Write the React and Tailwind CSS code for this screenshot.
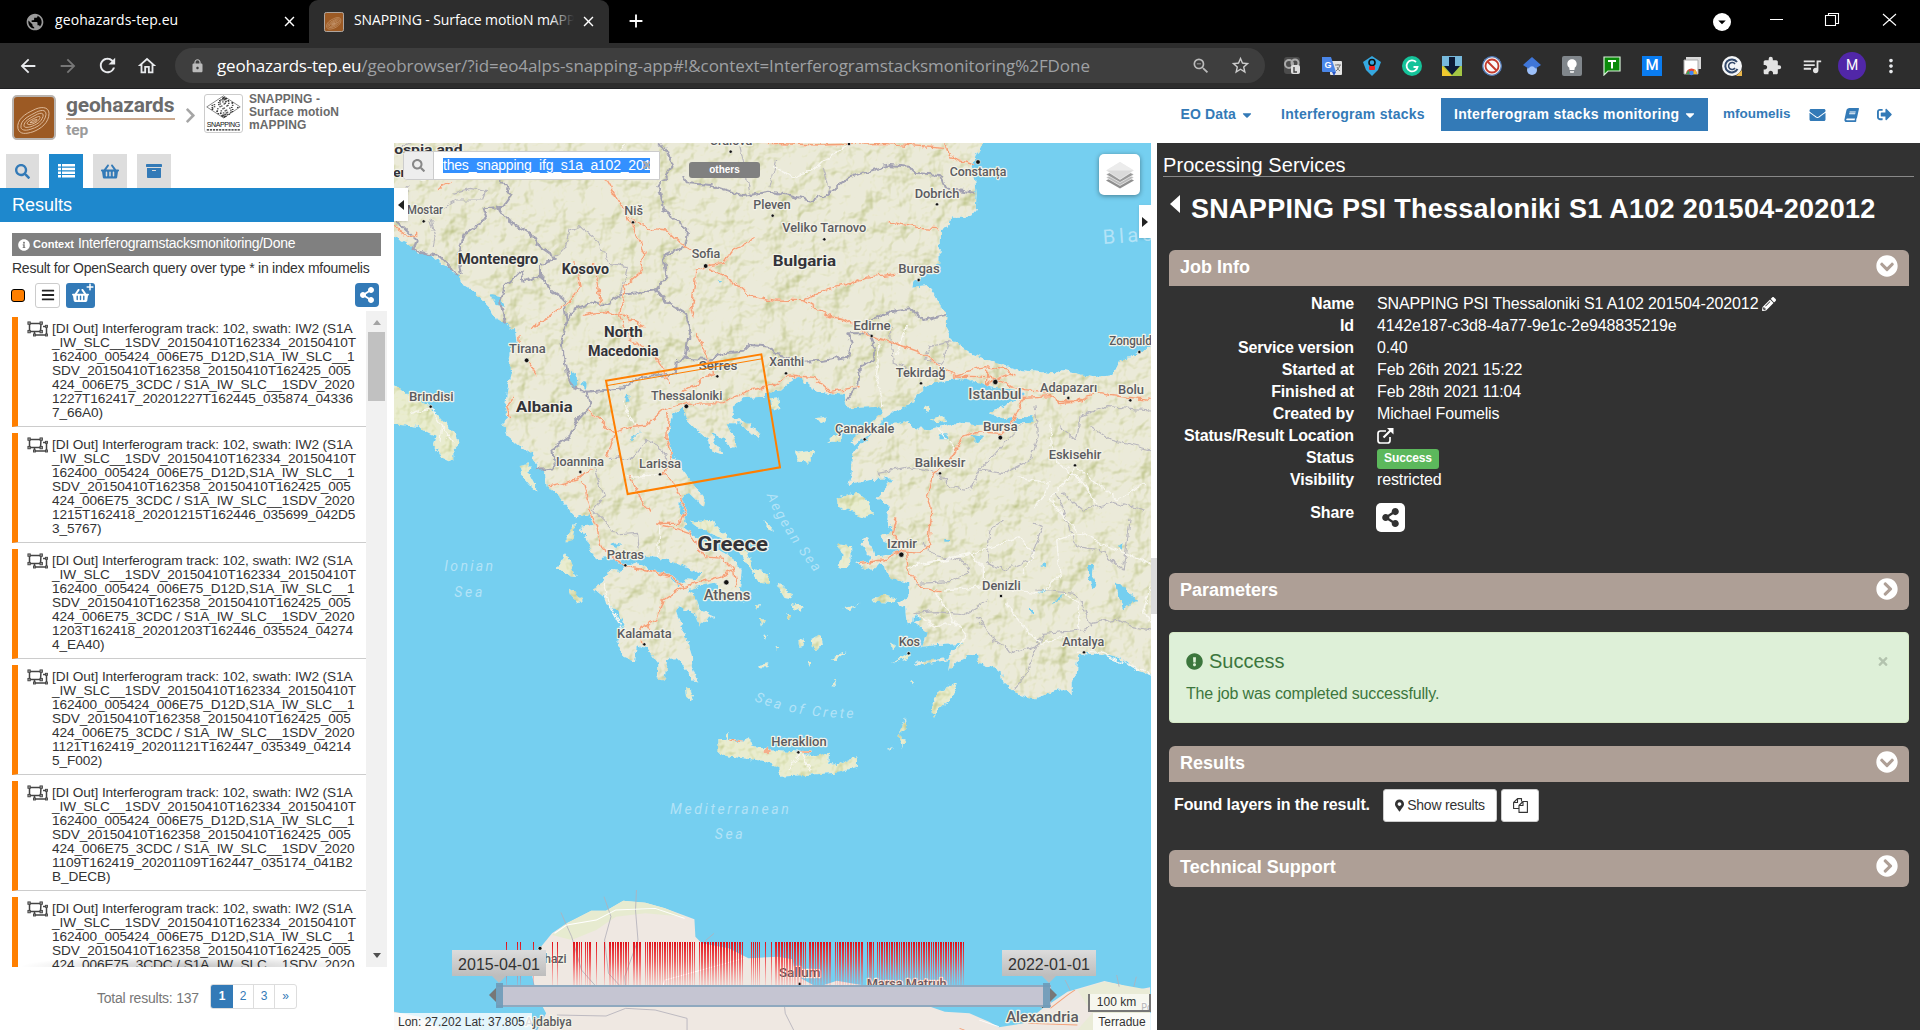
import React from "react";
import {
  FaSearch, FaThList, FaShoppingBasket, FaArchive, FaInfoCircle, FaShareAlt, FaBars, FaEnvelope, FaBook,
  FaSignOutAlt, FaPencilAlt, FaChevronCircleDown, FaChevronCircleRight, FaExclamationCircle,
  FaMapMarkerAlt, FaCaretDown, FaTimes, FaChevronRight, FaPlus,
} from "react-icons/fa";
import {
  MdArrowBack, MdArrowForward, MdRefresh, MdOutlineHome, MdLock, MdAdd, MdClose, MdStarBorder,
  MdExtension, MdQueueMusic, MdMoreVert, MdPublic, MdZoomOut, MdLightbulb, MdArrowDropDown,
} from "react-icons/md";

/* ---------- browser chrome ---------- */

function TopoLogo({ className }) {
  return (
    <svg viewBox="0 0 44 44" className={className} preserveAspectRatio="none">
      <rect x="1" y="1" width="42" height="42" rx="4" fill="#9c5a24" stroke="#b9b4b0" strokeWidth="2" />
      <g fill="none" stroke="#e3c3a4" strokeWidth="0.9">
        <path d="M6 33C4 24 14 18 21 15C28 11 37 11 37 18C37 27 29 33 21 36C14 38 8 39 6 33Z" />
        <path d="M9 32C8 25 16 21 22 18C29 14 34 14 34 19C33 26 27 31 20 33C15 35 10 35 9 32Z" />
        <path d="M12 30C12 26 17 23 23 20C28 17 32 17 31 21C29 27 24 29 19 31C15 32 12 32 12 30Z" />
        <path d="M15 28C16 25 20 24 24 22C28 20 29 21 27 24C25 27 20 29 17 29Z" />
        <path d="M18 27C20 25 23 24 25 24C24 26 21 27 18 27Z" />
      </g>
    </svg>
  );
}

function Extensions() {
  const box = "w-5 h-5 shrink-0";
  return (
    <div className="flex items-center gap-[20px] ml-[17px]">
      <svg viewBox="0 0 20 20" className={box}>
        <rect x="2" y="1" width="16" height="17" rx="3" fill="#4c4c4c" />
        <circle cx="7" cy="8" r="4" fill="none" stroke="#aaa" strokeWidth="2" />
        <circle cx="13" cy="7" r="3.5" fill="none" stroke="#aaa" strokeWidth="2" />
        <rect x="9" y="9" width="9" height="9" rx="2" fill="#ddd" />
        <path d="M12 11v5h3" fill="none" stroke="#444" strokeWidth="1.4" />
      </svg>
      <svg viewBox="0 0 20 20" className={box}>
        <rect x="8" y="5" width="12" height="14" rx="1" fill="#e4e4e4" />
        <path d="M0 1H9L14 16H1Q0 16 0 15Z" fill="#4a86e8" />
        <path d="M10 16h4l-2 4z" fill="#2a56c6" />
        <text x="2.5" y="11.5" fontSize="9" fontWeight="bold" fill="#fff" fontFamily="Liberation Sans, sans-serif">G</text>
        <path d="M13 9h6M16 8v1M18 9q-1 4-4 6M15 11q1 3 3 4" stroke="#777" fill="none" />
      </svg>
      <svg viewBox="0 0 20 20" className={box}>
        <path d="M10 0L19 6L16 14L10 20L4 14L1 6Z" fill="#35a8e0" />
        <circle cx="10" cy="6.500" r="3" fill="none" stroke="#111" strokeWidth="1.6" />
        <rect x="7" y="10" width="6" height="4" rx="1" fill="#e22" />
      </svg>
      <svg viewBox="0 0 20 20" className={box}>
        <circle cx="10" cy="10" r="10" fill="#15c39a" />
        <path d="M14 6A5.500 5.500 0 1 0 15.500 11H11.500" fill="none" stroke="#fff" strokeWidth="1.8" />
      </svg>
      <svg viewBox="0 0 20 20" className={box}>
        <rect width="20" height="20" fill="#77b9dc" />
        <path d="M0 10H20V20H0Z" fill="#a3c644" />
        <path d="M0 10L10 20H0Z" fill="#f1c82e" />
        <path d="M7 1h6v9h5l-8 9-8-9h5z" fill="#0d1a36" />
      </svg>
      <svg viewBox="0 0 20 20" className={box}>
        <circle cx="10" cy="10" r="9.500" fill="#f2f2f2" />
        <circle cx="10" cy="10" r="6.500" fill="#fafafa" stroke="#c33a2c" strokeWidth="1.800" />
        <path d="M5.500 5.500L14.500 14.500" stroke="#c33a2c" strokeWidth="2" />
        <circle cx="10" cy="10" r="9.300" fill="none" stroke="#4d76b4" strokeWidth="1.300" />
      </svg>
      <svg viewBox="0 0 20 20" className={box}>
        <circle cx="10" cy="14" r="5" fill="#9cc0fa" />
        <path d="M10 1L19 9L13.500 12.500Q10 8 6.500 12.500L1 9Z" fill="#3f76d8" />
      </svg>
      <span className="w-5 h-5 rounded-[2px] bg-[#80868b] flex items-center justify-center shrink-0">
        <MdLightbulb className="text-white w-4 h-4" />
      </span>
      <svg viewBox="0 0 20 20" className={box}>
        <path d="M2 1H18V15H6L2 19Z" fill="#0a8a0a" stroke="#d7f2d7" strokeWidth="1.200" />
        <path d="M6 5H14M10 5V12.500" stroke="#fff" strokeWidth="2" />
      </svg>
      <span className="w-5 h-5 bg-[#0a7cf0] text-white text-[15px] flex items-center justify-center font-['Roboto',sans-serif] font-medium shrink-0">M</span>
      <svg viewBox="0 0 20 20" className={box}>
        <path d="M4 1H19V13H4Z" fill="#d8d8d8" />
        <path d="M2 4H16V18H2Z" fill="#fff" stroke="#aaa" />
        <path d="M4 18A5.500 5.500 0 0 1 15 18Z" fill="#de4b3c" />
        <path d="M10 18L15 18L13 13Z" fill="#f2bf2b" />
        <path d="M4 18L6.500 14L8 18Z" fill="#3aa757" />
        <circle cx="9.500" cy="17" r="2.200" fill="#4285f4" />
      </svg>
      <svg viewBox="0 0 20 20" className={box}>
        <circle cx="10" cy="10" r="10" fill="#f4f6f8" />
        <path d="M15 6A6.500 6.500 0 1 0 15.500 13" fill="none" stroke="#33496b" strokeWidth="2" />
        <path d="M13 8A3.500 3.500 0 1 0 13 12" fill="none" stroke="#33496b" strokeWidth="1.500" />
        <path d="M14 20L20 14V20Z" fill="#e9b64a" />
      </svg>
      <MdExtension className="w-5 h-5 text-[#e3e3e3] shrink-0" />
      <MdQueueMusic className="w-[22px] h-[22px] text-[#e3e3e3] shrink-0 -mx-px" />
    </div>
  );
}

function Chrome() {
  return (
    <div className="font-['Open_Sans','Noto_Sans',sans-serif] shrink-0">
      <div className="h-[43px] bg-black flex items-start">
        <div className="w-[309px] h-[43px] flex items-center pl-[25px] text-white">
          <MdPublic className="w-[20px] h-[20px] text-[#9a9a9a]" />
          <span className="ml-[10px] w-[218px] text-[14px] leading-[18px] tracking-[0.1px] mb-[3px]">geohazards-tep.eu</span>
          <MdClose className="w-[17px] h-[17px] ml-[8px]" />
        </div>
        <div className="w-[300px] h-[43px] bg-[#2d2d2d] rounded-t-[9px] flex items-center pl-[15px] text-white">
          <TopoLogo className="w-5 h-5" />
          <span className="relative ml-[10px] w-[220px] overflow-hidden whitespace-nowrap text-[14px] leading-[20px] tracking-[-0.1px] mb-[3px]">
            SNAPPING - Surface motioN mAPPING
            <span className="absolute right-0 inset-y-0 w-6 bg-gradient-to-r from-transparent to-[#2d2d2d]" />
          </span>
          <MdClose className="w-[17px] h-[17px] ml-[6px]" />
        </div>
        <MdAdd className="w-[22px] h-[22px] text-white mt-[10px] ml-[16px]" />
        <div className="ml-auto flex items-center text-white h-[38px] pr-[21px]">
          <span className="w-[18px] h-[18px] mt-[6px] mr-[3px] rounded-full bg-white flex items-center justify-center text-black">
            <MdArrowDropDown className="w-[18px] h-[18px]" />
          </span>
          <svg viewBox="0 0 130 16" className="w-[130px] h-[16px] ml-[35px]">
            <g fill="none" stroke="#fff" strokeWidth="1.1">
              <path d="M1 8.500H14M56.500 4.500H66.500V14.500H56.500ZM59.500 4.500V2.500H69.500V12.500H66.500M114 3L127 14.500M127 3L114 14.500" />
            </g>
          </svg>
        </div>
      </div>
      <div className="h-[46px] bg-[#2d2d2d] border-b border-[#202124] flex items-center text-[#e8eaed]">
        <MdArrowBack className="w-[22px] h-[22px] ml-[17px]" />
        <MdArrowForward className="w-[22px] h-[22px] ml-[18px] text-[#777]" />
        <MdRefresh className="w-[23px] h-[23px] ml-[17px]" />
        <MdOutlineHome className="w-[22px] h-[22px] ml-[17px]" />
        <div className="ml-[17px] w-[1090px] h-[35px] bg-[#3e3e3e] rounded-full flex items-center pl-[15px] pr-[14px] text-[17px] tracking-[-0.2px]">
          <MdLock className="w-[15px] h-[16px] text-[#bbb]" />
          <span className="ml-[12px] text-white">geohazards-tep.eu</span>
          <span className="text-[#9fa1a4] tracking-[-0.07px]">/geobrowser/?id=eo4alps-snapping-app#!&amp;context=Interferogramstacksmonitoring%2FDone</span>
          <MdZoomOut className="w-[20px] h-[20px] ml-auto text-[#bbb]" />
          <MdStarBorder className="w-[21px] h-[21px] ml-[19px] text-[#ccc]" />
        </div>
        <Extensions />
        <span className="ml-[16px] w-[28px] h-[28px] rounded-full bg-[#5127a8] text-white text-[14px] flex items-center justify-center font-['Roboto',sans-serif]">M</span>
        <MdMoreVert className="w-[22px] h-[22px] ml-[14px]" />
      </div>
    </div>
  );
}

/* ---------- site header ---------- */

const speckles = Array.from({ length: 70 }, (_, i) => {
  const y = ((i * 37) % 29) - 14;
  const half = 17 * (1 - Math.abs(y) / 15);
  const x = (((i * 53) % 21) / 10 - 1) * half;
  return [21 + x, 13.5 + y * 0.78];
});

function Header() {
  return (
    <div className="h-[54px] shrink-0 flex items-start bg-white">
      <TopoLogo className="w-[44px] h-[45px] ml-[12px] mt-[6px]" />
      <div className="ml-[10px] mt-[6px] w-[109px] font-['Roboto',sans-serif]">
        <div className="h-[25px] border-b-2 border-[#cba98d] text-[#6b6b6b] font-bold text-[21px] leading-[21px] tracking-[-0.2px]">geohazards</div>
        <div className="text-[#9b9b9b] font-bold text-[15.500px] leading-[21px]">tep</div>
      </div>
      <FaChevronRight className="w-[13px] h-[17px] mt-[18px] ml-[9px] text-[#a5a5a5]" />
      <div className="ml-[7px] mt-[5px] w-[39px] h-[39px] border border-[#ccc] rounded-[3px]">
        <svg viewBox="0 0 42 42" className="w-full h-full">
          <path d="M21 1L40 13.500L21 26L2 13.500Z" fill="#fff" stroke="#555" strokeWidth="0.8" />
          {speckles.map(([x, y], i) => (
            <rect key={i} x={x} y={y} width="1.800" height="1.200" fill="#333" />
          ))}
          <text x="2" y="36" fontSize="8" textLength="38" fill="#111" fontFamily="Liberation Sans, sans-serif">SNAPPING</text>
          <path d="M2 39.500H40" stroke="#222" strokeWidth="1.500" strokeDasharray="2.500 1" />
        </svg>
      </div>
      <div className="ml-[6px] mt-[4px] font-bold text-[12px] leading-[13px] text-[#6a6a6a] w-[110px] tracking-[0.1px]">
        <div>SNAPPING -</div>
        <div>Surface motioN</div>
        <div>mAPPING</div>
      </div>
      <div className="ml-auto mt-[9px] h-[33px] flex items-center font-bold text-[14px] text-[#337ab7] pr-[28px] whitespace-nowrap">
        <span className="tracking-[0.15px]">EO Data</span>
        <FaCaretDown className="w-[10px] h-[14px] ml-[6px]" />
        <span className="ml-[29px] w-[144px] tracking-[0.27px]">Interferogram stacks</span>
        <span className="ml-[16px] w-[267px] h-[33px] bg-[#337ab7] text-white flex items-center pl-[13px] tracking-[0.32px]">
          Interferogram stacks monitoring
          <FaCaretDown className="w-[10px] h-[14px] ml-[6px]" />
        </span>
        <span className="ml-[15px] w-[68px] text-[13.500px] tracking-[0px]">mfoumelis</span>
        <FaEnvelope className="w-[17px] h-[16px] ml-[18px]" />
        <FaBook className="w-[15px] h-[14px] ml-[18px] -skew-x-12" />
        <FaSignOutAlt className="w-[15px] h-[15px] ml-[18px]" />
      </div>
    </div>
  );
}

/* ---------- left panel ---------- */

const common = [
  "[DI Out] Interferogram track: 102, swath: IW2 (S1A",
  "_IW_SLC__1SDV_20150410T162334_20150410T",
  "162400_005424_006E75_D12D,S1A_IW_SLC__1",
  "SDV_20150410T162358_20150410T162425_005",
  "424_006E75_3CDC / S1A_IW_SLC__1SDV_2020",
];
const items = [
  ["1227T162417_20201227T162445_035874_04336", "7_66A0)"],
  ["1215T162418_20201215T162446_035699_042D5", "3_5767)"],
  ["1203T162418_20201203T162446_035524_04274", "4_EA40)"],
  ["1121T162419_20201121T162447_035349_04214", "5_F002)"],
  ["1109T162419_20201109T162447_035174_041B2", "B_DECB)"],
  [],
];

function PolyIcon() {
  return (
    <svg viewBox="0 0 22 16" className="w-[22px] h-[16px] shrink-0">
      <g fill="none" stroke="#444" strokeWidth="1.500">
        <path d="M2.500 2.500H14L13.500 10.500H2.500ZM16 5.500H19.500V14H7.500V11" />
      </g>
      <g fill="#999" stroke="#444" strokeWidth="0.900">
        <rect x="0.900" y="0.900" width="2.400" height="2.400" /><rect x="13" y="0.900" width="2.400" height="2.400" />
        <rect x="0.900" y="9.400" width="2.400" height="2.400" /><rect x="13" y="9.400" width="2.400" height="2.400" />
        <rect x="18.500" y="4.300" width="2" height="2" /><rect x="18.500" y="13" width="2" height="2" />
        <rect x="6.500" y="13" width="2" height="2" />
      </g>
    </svg>
  );
}

function LeftPanel() {
  const tab = "h-[34px] flex items-center justify-center bg-[#ddd] text-[#337ab7]";
  return (
    <div className="w-[394px] shrink-0 bg-white flex flex-col">
      <div className="flex pl-[6px] gap-[10px] pt-[11px]">
        <div className={`${tab} w-[33px]`}><FaSearch className="w-[15px] h-[15px]" /></div>
        <div className="h-[34px] w-[34px] flex items-center justify-center bg-[#1e88cd] text-white">
          <svg viewBox="0 0 17 14" className="w-[17px] h-[14px]" fill="currentColor">
            <path d="M0 0h3v2.500H0zM4 0h13v2.500H4zM0 3.700h3v2.500H0zM4 3.700h13v2.500H4zM0 7.400h3v2.500H0zM4 7.400h13v2.500H4zM0 11.100h3v2.500H0zM4 11.100h13v2.500H4z" />
          </svg>
        </div>
        <div className={`${tab} w-[34px]`}><FaShoppingBasket className="w-[18px] h-[17px]" /></div>
        <div className={`${tab} w-[34px]`}><FaArchive className="w-[16px] h-[16px]" /></div>
      </div>
      <div className="h-[34px] bg-[#1e88cd] text-white text-[18px] leading-[35px] pl-[12px]">Results</div>
      <div className="mt-[11px] mx-[12px] w-[369px] h-[23px] bg-[#808080] text-white flex items-center pl-[6px]">
        <FaInfoCircle className="w-[12px] h-[12px]" />
        <span className="ml-[3px] text-[11px] font-bold">Context</span>
        <span className="ml-[4px] mb-[2px] text-[14px] tracking-[-0.27px]">Interferogramstacksmonitoring/Done</span>
      </div>
      <div className="ml-[12px] h-[24px] leading-[25px] text-[14px] text-[#333] tracking-[-0.25px] whitespace-nowrap">Result for OpenSearch query over type * in index mfoumelis</div>
      <div className="flex items-center h-[31px] pl-[11px] pb-px">
        <span className="w-[14px] h-[13px] mt-px rounded-[3px] bg-[#ff7f00] border border-black" />
        <span className="ml-[10px] w-[25px] h-[25px] rounded-[3px] border border-[#ccc] flex items-center justify-center text-[#222]"><FaBars className="w-[14px] h-[14px]" /></span>
        <span className="relative ml-[6px] w-[29px] h-[25px] rounded-[3px] bg-[#337ab7] flex items-center justify-center text-white">
          <FaShoppingBasket className="w-[17px] h-[15px]" />
          <FaPlus className="absolute right-[1px] top-0 w-[8px] h-[8px]" />
        </span>
        <span className="ml-[260px] w-[24px] h-[24px] rounded-[4px] bg-[#337ab7] flex items-center justify-center text-white"><FaShareAlt className="w-[16px] h-[16px]" /></span>
      </div>
      <div className="flex h-[656px]">
        <div className="relative w-[366px] h-[656px] overflow-hidden pl-[12px] pt-[6px]">
          {items.map((it, i) => (
            <div key={i} className="h-[110px] mb-[6px] border-l-[6px] border-l-[#ff7f00] border-b border-b-[#ccc] flex pt-[4px] pl-[9px] text-[#444]">
              <PolyIcon />
              <div className="ml-[3px] pt-px text-[13.650px] leading-[14px] whitespace-nowrap tracking-[-0.1px] text-[#333]">
                {[...common, ...it].map((l) => <div key={l}>{l}</div>)}
              </div>
            </div>
          ))}
          <div className="absolute left-[18px] right-0 bottom-0 h-[12px] bg-[radial-gradient(ellipse_at_bottom,rgba(0,0,0,0.24),transparent_70%)]" />
        </div>
        <div className="w-[21px] bg-[#f1f1f1] flex flex-col items-center">
          <div className="mt-[9px] w-0 h-0 border-x-[4.500px] border-x-transparent border-b-[5px] border-b-[#a3a3a3]" />
          <div className="mt-[7px] w-[17px] h-[69px] bg-[#c1c1c1]" />
          <div className="mt-auto mb-[9px] w-0 h-0 border-x-[4.500px] border-x-transparent border-t-[5px] border-t-[#505050]" />
        </div>
      </div>
      <div className="flex items-start pt-[17px] pl-[97px]">
        <span className="w-[113px] pt-[5px] text-[14px] leading-[18px] text-[#777] tracking-[-0.22px]">Total results: 137</span>
        <div className="flex h-[25px] border border-[#ddd] rounded-[3px] text-[12px] leading-[22px] text-[#337ab7] text-center overflow-hidden">
          <span className="w-[22px] bg-[#337ab7] text-white font-bold">1</span>
          <span className="w-[21px] border-r border-[#ddd]">2</span>
          <span className="w-[21px] border-r border-[#ddd]">3</span>
          <span className="w-[21px] leading-[23px]">»</span>
        </div>
      </div>
    </div>
  );
}

/* ---------- map ---------- */
/* Map drawings use three units for one pixel; the visible window starts at (12, 9). */

const mainland =
  "M-20 -20H1790L1760 40L1750 70L1760 160L1757 210L1740 230L1685 230L1675 265L1650 270L1648 370L1625 385L1575 425L1570 440L1610 435L1630 460L1660 510L1670 530L1665 560L1685 600L1740 640L1820 670L1890 690L1990 700L2020 690L2110 712L2170 705L2190 665L2240 640L2320 600V1620L2283 1605L2240 1590L2190 1555L2125 1540L2065 1545L2060 1605L2045 1630L2045 1665L2030 1650L2000 1652L1940 1678L1910 1670L1870 1655L1840 1630L1835 1595L1800 1580L1765 1570L1760 1540L1740 1550L1700 1565L1675 1592L1680 1560L1600 1570L1575 1578L1580 1565L1675 1555L1680 1538L1720 1512L1640 1515L1595 1520L1610 1480L1575 1450L1595 1440L1572 1422L1570 1445L1550 1450L1545 1400L1520 1390L1555 1375L1555 1330L1495 1310L1485 1280L1470 1272L1445 1295L1400 1268L1445 1265L1418 1215L1420 1195L1440 1205L1455 1250L1530 1240L1525 1220L1480 1205L1475 1185L1508 1175L1485 1130L1500 1100L1460 1075L1510 1018L1440 1020L1375 1035L1385 1000L1390 935L1440 890L1480 855L1520 850L1555 840L1570 865L1620 868L1690 850L1760 855L1900 850L1928 848L1925 832L1880 830L1840 835L1795 820L1830 805L1880 780L1905 762L1895 752L1840 745L1780 735L1730 718L1670 720L1600 740L1570 785L1520 810L1475 840L1430 890L1395 912L1385 900L1440 850L1480 815L1470 800L1375 805L1365 765L1290 755L1260 740L1225 710L1200 725L1170 752L1140 755L1120 770L1060 775L1025 800L1030 830L1060 845L1105 875L1110 895L1080 880L1050 850L1010 850L1025 880L1040 920L1025 928L1000 895L965 880L970 900L1000 945L960 930L955 900L920 870L890 840L880 800L845 825L832 900L850 950L880 990L915 1040L947 1080L942 1100L900 1060L872 1080L870 1120L890 1150L880 1165L900 1180L960 1215L1030 1255L1055 1290L1050 1350L1060 1385L1020 1365L1000 1355L975 1325L930 1335L895 1350L920 1380L930 1410L975 1430L950 1440L925 1458L915 1420L870 1402L858 1412L870 1450L895 1505L910 1555L905 1580L925 1625L905 1620L875 1570L860 1555L832 1556L822 1622L803 1615L805 1570L770 1525L740 1515L735 1565L700 1550L682 1505L690 1480L705 1450L685 1415L645 1390L640 1370L610 1345L640 1325L650 1292L690 1295L700 1280L740 1265L780 1290L840 1310L865 1335L890 1330L885 1315L925 1318L935 1300L900 1285L850 1265L800 1250L740 1245L690 1250L650 1255L615 1258L595 1210L570 1160L610 1155L600 1125L560 1135L525 1095L500 1060L470 1040L465 1000L440 975L425 940L380 910L350 885L337 848L357 830L345 800L350 760L358 720L365 690L355 665L360 630L380 610L375 570L345 552L315 535L300 505L270 475L240 445L215 430L205 405L165 375L120 345L80 335L50 310L-20 275Z";

const islands = [
  "M-10 715L40 755L110 790L150 835L200 885L205 915L190 930L190 968L150 950L132 915L140 890L80 860L-10 850Z",
  "M385 975L420 970L415 1000L445 1055L420 1035L395 1005Z",
  "M530 1190L555 1150L548 1200L530 1205Z",
  "M495 1290L515 1265L525 1240L540 1260L560 1310L540 1310L515 1290Z",
  "M535 1345L580 1375L565 1392L540 1365Z",
  "M885 1640L912 1662L902 1682L888 1670Z",
  "M900 1145L960 1140L1000 1180L1045 1210L1075 1240L1090 1290L1140 1300L1135 1330L1105 1325L1070 1270L1040 1225L980 1190L920 1160Z",
  "M1160 1335L1200 1360L1205 1375L1180 1370Z",
  "M1095 1395L1110 1392L1102 1412Z",
  "M1112 1435L1125 1440L1116 1460Z",
  "M1120 1485L1133 1482L1128 1496Z",
  "M1160 1330L1190 1345L1204 1375L1180 1360Z",
  "M1205 1392L1244 1402L1235 1412L1210 1405Z",
  "M1190 1425H1198V1440H1188Z",
  "M1225 1502L1245 1498L1240 1518L1228 1520Z",
  "M1262 1500L1290 1482L1295 1510L1280 1530L1264 1515Z",
  "M1360 1405L1405 1395L1412 1388L1380 1410Z",
  "M1448 1378L1480 1365L1520 1375L1510 1390L1455 1385Z",
  "M1340 1210L1380 1215L1382 1260L1365 1290L1345 1285L1358 1245Z",
  "M1340 1075L1400 1055L1430 1080L1452 1120L1425 1130L1380 1115L1345 1100Z",
  "M1215 935L1240 932L1272 930L1262 965L1225 962Z",
  "M1140 778L1165 775L1168 800L1145 810Z",
  "M1278 835L1305 830L1310 845L1290 850Z",
  "M1312 905L1330 888L1355 885L1355 905Z",
  "M1620 835L1660 828L1668 845L1640 850Z",
  "M1598 805L1618 800L1615 812Z",
  "M985 1800L1005 1800L1012 1775L1018 1800L1060 1805L1080 1792L1085 1820L1140 1828L1230 1835L1280 1850L1320 1838L1318 1870L1340 1878L1365 1862L1402 1852L1400 1885L1340 1898L1170 1910L1168 1885L1120 1862L1060 1855L985 1845Z",
  "M1700 1628L1690 1670L1650 1705L1630 1730L1625 1690L1650 1650Z",
  "M1545 1735L1548 1765L1530 1780L1548 1810L1535 1820L1528 1785Z",
  "M1490 1830L1512 1820L1500 1832Z",
  "M1505 1570L1560 1540L1562 1552L1520 1565Z",
  "M1105 1575L1135 1570L1130 1582L1108 1582Z",
  "M1248 1560L1262 1570L1258 1580Z",
  "M1322 1558L1370 1535L1340 1560Z",
  "M1325 1638L1340 1622L1332 1618L1338 1640Z",
  "M1155 1517L1168 1522L1162 1532Z",
  "M1120 1140L1140 1160L1150 1172L1130 1165Z",
  "M1502 1510L1518 1520L1510 1530Z",
  "M1560 1622L1578 1630L1572 1636Z",
];

const lakes = [
  "M540 690L560 705L562 740L552 748L540 735Z",
  "M575 725L590 730L588 748Z",
  "M755 870L725 895L722 905Z",
  "M300 462L330 468L345 500L320 495Z",
  "M1650 880L1675 880L1678 898L1648 898Z",
  "M1740 885L1785 890L1760 905Z",
  "M2090 1275H2112L2108 1300L2122 1335L2108 1355L2100 1320Z",
  "M2177 1330L2200 1335L2238 1385L2198 1405Z",
  "M1985 1390L2020 1365L2015 1380Z",
  "M1940 1360L1975 1350L1960 1365Z",
  "M1950 1278L1965 1272V1285Z",
  "M2185 1215L2198 1210L2190 1235Z",
  "M660 1215L690 1208L680 1225Z",
  "M980 420H992V430Z",
  "M710 765H718V785H710Z",
  "M1660 1200H1680V1208H1660Z",
  "M1920 1410H1932V1420H1920Z",
];

const borders = [
  "M330 120L365 165L340 200L280 205L290 235L225 280L205 330L215 400",
  "M320 200L345 235L420 280L440 310L490 345L495 362L450 372L450 408L400 425L395 390L345 440L330 485L345 548",
  "M450 408L490 455L520 475L530 545L515 610L530 700L550 745L590 755L600 800L555 850L540 890L490 925L495 985L440 990",
  "M530 545L550 510L610 485L640 495L690 465L740 460L800 450",
  "M812 9L850 70L805 140L825 215L895 270L885 320L820 350L830 410L800 450L835 490L885 520L900 575L890 655L860 660L858 700L750 710L700 745L590 755",
  "M890 657L960 660L1000 640L1060 635L1080 615L1140 620L1160 645L1240 665L1300 662L1375 650L1385 615L1372 580L1440 580L1455 620L1450 660L1410 680L1405 735L1370 780",
  "M1430 545L1480 525L1520 510L1560 505L1600 540L1665 525",
  "M880 110L890 130L960 135L1060 168L1140 155L1200 165L1260 182L1320 160L1370 115L1420 98L1500 75L1555 80L1570 98L1650 105L1665 145L1755 158",
  "M15 240L80 300L70 330L150 350L205 408",
];

const softBorders = [
  "M495 350L530 320L540 270L570 260L610 290L640 330L660 370L712 380L700 440L685 465",
  "M12 180L60 140M120 240L135 290L130 320M150 210L200 180L280 180L290 155L240 145L190 160",
  "M655 955L730 955L770 900L820 930L830 965M610 975L640 1070L610 1110L660 1160L680 1185L740 1180L745 1230",
  "M1640 995L1680 1040L1740 1050L1770 990L1840 1000L1920 960L1945 880L1935 800",
  "M1840 1140L1800 1170L1790 1270L1850 1290L1920 1260L1960 1160L1930 1150",
  "M1580 1330L1680 1325L1740 1300L1720 1265L1630 1245L1600 1210",
  "M1575 1420L1640 1415L1720 1425L1790 1380M1765 1430L1800 1490L1870 1540L1940 1520L1910 1600L1870 1650",
  "M1940 1520L1960 1480L2080 1470L2105 1460L2060 1360L1940 1350M2105 1450L2180 1435L2230 1460L2283 1470",
  "M2010 860L2060 900L2070 830L2150 800L2283 810M2020 1060L2080 1110L2170 1085L2260 1110M2283 930L2160 900L2100 860",
  "M1680 600L1660 670L1600 660L1620 620L1685 605M1500 550L1505 620L1510 670L1560 690",
  "M2000 1060L2060 1220L2130 1230L2200 1290L2220 1140M1900 850L1760 1000M1465 1000L1560 980L1640 995",
  "M15 30L60 9M200 9L180 60M1160 60L1140 140M1300 80L1320 160M1050 20L1080 160",
];

const roads = [
  "M650 120L690 190L715 230L765 340L750 400L705 440L690 520L760 560",
  "M730 240L780 265L830 270L870 310L900 330M945 378L1000 370L1030 330L1090 300M945 378L918 390L905 500L912 528",
  "M960 385L1050 440L1080 468L1150 480L1240 482L1290 455L1380 430L1430 412L1520 400",
  "M1240 482L1300 520L1370 540L1440 588L1530 615L1600 640L1650 680L1700 705L1760 685L1790 680L1850 690L1875 705",
  "M1690 708L1760 710L1800 715L1830 725L1900 748L1960 755L2000 780L2060 785L2120 760L2190 770L2283 778",
  "M1900 775L1985 770L2010 788L2080 782",
  "M580 525L640 515L690 525L720 600L790 640L820 690L835 730M555 365L570 440L540 480L480 530L420 565M610 370L632 490",
  "M595 810L675 880L720 860L770 855L820 810L890 790L1000 788L1080 750L1140 740L1200 705L1270 712L1320 755L1410 740",
  "M835 820L830 900L845 960L820 1000L860 1040L885 1110L870 1150L810 1150",
  "M675 880L650 950M480 1040L560 1020L600 985M575 1025L600 1110L620 1160L635 1220L705 1280L770 1290L840 1305L880 1340L990 1310L1030 1290",
  "M880 1340L820 1380L800 1440L750 1460L755 1510M770 1450L790 1480",
  "M720 1010L755 1080L780 1120M390 590V640M415 665L440 705M370 775L350 800L358 830",
  "M800 1152L860 1165L905 1180L940 1250L1000 1255L1030 1285L1040 1340",
  "M1495 245L1580 262L1645 266M1660 9L1680 50L1750 72",
  "M1680 960L1720 890L1760 875L1830 880L1865 850L1900 775M1680 960L1630 1000L1610 1070L1625 1120L1615 1220L1590 1240L1530 1235L1480 1260L1410 1270",
  "M1550 1240L1555 1290L1600 1345L1650 1355M1520 1140L1510 1180L1535 1225M920 585L950 650L970 700L870 760M1790 690V730L1865 700",
  "M1020 1800L1060 1805M1120 1830L1140 1830M1225 1838L1265 1840",
  "M12 262L60 290L80 280M145 145L180 128M1110 9L1290 15L1480 10L1660 25",
];

const whiteRoads = [
  "M60 820L120 805L155 860L150 905M155 860L190 905M700 780L720 830L740 860M700 1010L800 1005M810 1150L805 1250",
  "M1470 610L1460 700L1475 800M1550 560L1520 640M1640 860L1700 930M1980 850L1985 950L2080 1030L2120 1090M1880 1010L1980 1030L1940 1100",
  "M1560 1280L1720 1250L1890 1190L1930 1240L1900 1300M1600 1270L1740 1240L1780 1280L1780 1340L1660 1350M1780 1340L1960 1360L2010 1300L2000 1200L2070 1180L2180 1230L2283 1270",
  "M1640 1360L1690 1440L1730 1490L1700 1520M1850 1395L1890 1450L1950 1510L2020 1490M1580 1430L1640 1460L1690 1450M2060 1540L2130 1535L2230 1580L2283 1600",
  "M2020 1360L2060 1390L2070 1470M2283 1340L2260 1400L2280 1450M2060 1170L1980 1080L2060 980L2180 1080L2260 1030M640 1330L660 1400L700 1470",
  "M1150 80L1210 110L1270 90L1300 60L1370 20M1230 1840L1195 1890M1235 1845L1260 1890M700 9L680 60",
];

const halo = { paintOrder: "stroke", stroke: "#f4f3e8", strokeWidth: 7, strokeLinejoin: "round" };

/* text, centre x, baseline, width, font size, weight */
const labels = [
  ["ospia and", 115, 43, 205, 40, 700],
  ["erzegovina", 110, 112, 200, 40, 700],
  ["Mostar", 105, 221, 108, 36, 500],
  ["Niš", 731, 225, 56, 36, 500],
  ["Craiova", 1023, 15, 128, 36, 500],
  ["Sofia", 948, 355, 86, 36, 500],
  ["Montenegro", 324, 373, 242, 42, 700],
  ["Kosovo", 586, 403, 142, 42, 700],
  ["North", 700, 591, 116, 42, 700],
  ["Macedonia", 700, 648, 212, 42, 700],
  ["Tirana", 412, 640, 110, 36, 500],
  ["Brindisi", 124, 782, 134, 36, 500],
  ["Albania", 463, 817, 170, 44, 700],
  ["Serres", 984, 690, 116, 36, 500],
  ["Thessaloniki", 890, 779, 214, 36, 500],
  ["Ioannina", 570, 978, 144, 36, 500],
  ["Larissa", 810, 983, 126, 36, 500],
  ["Constanța", 1764, 107, 170, 36, 500],
  ["Dobrich", 1641, 174, 134, 36, 500],
  ["Pleven", 1146, 208, 112, 36, 500],
  ["Veliko Tarnovo", 1303, 277, 252, 36, 500],
  ["Bulgaria", 1243, 379, 190, 44, 700],
  ["Burgas", 1587, 400, 124, 36, 500],
  ["Edirne", 1446, 570, 112, 36, 500],
  ["Xanthi", 1190, 679, 104, 36, 500],
  ["Tekirdağ", 1592, 711, 150, 36, 500],
  ["Istanbul", 1815, 777, 160, 42, 500],
  ["Adapazarı", 2036, 755, 172, 36, 500],
  ["Bolu", 2223, 762, 78, 36, 500],
  ["Zonguldak", 2240, 616, 164, 36, 500],
  ["Bursa", 1831, 872, 104, 38, 500],
  ["Çanakkale", 1424, 879, 178, 36, 500],
  ["Balıkesir", 1650, 981, 152, 36, 500],
  ["Eskisehir", 2055, 957, 158, 36, 500],
  ["Patras", 706, 1257, 112, 36, 500],
  ["Greece", 1028, 1232, 212, 60, 700],
  ["Athens", 1011, 1379, 140, 42, 500],
  ["Kalamata", 763, 1493, 164, 36, 500],
  ["Izmir", 1536, 1223, 90, 38, 500],
  ["Denizli", 1834, 1349, 116, 36, 500],
  ["Kos", 1558, 1519, 64, 36, 500],
  ["Antalya", 2080, 1518, 126, 36, 500],
  ["Heraklion", 1227, 1817, 166, 36, 500],
  ["Benghazi", 455, 2470, 150, 36, 500],
  ["Sallum", 1229, 2512, 124, 36, 500],
  ["Marsa Matruh", 1550, 2544, 240, 36, 500],
  ["Ajdabiya", 475, 2657, 140, 36, 500],
  ["Alexandria", 1957, 2646, 218, 42, 500],
  ["Port", 2280, 2612, 52, 30, 500],
];

const dots = [
  [101, 244], [729, 247], [1022, 35], [947, 378, 7], [410, 661, 7], [122, 800], [982, 709], [889, 799, 7], [571, 996], [810, 1003],
  [1764, 66, 7], [1641, 193], [1148, 227], [1303, 298], [1586, 420], [1445, 588], [1188, 700], [1593, 730], [1816, 726, 8], [2035, 774],
  [2221, 781], [2248, 636], [1831, 893, 7], [1424, 898], [1650, 1000], [2055, 976], [706, 1276], [1149 - 140 + 0, 1327, 8], [763, 1513],
  [1534, 1244, 8], [1833, 1368], [1556, 1540], [2082, 1537], [1225, 1837], [1229, 2532], [450, 2425, 6], [1958, 2597, 7], [1377, 12],
];

const tickGroups = [
  [236, 237, 1], [259, 264, 2], [292, 293, 1], [329, 341, 2], [372, 388, 6], [398, 408, 4], [420, 421, 1], [435, 436, 1], [445, 484, 13], [494, 509, 6],
  [520, 618, 30], [629, 716, 28], [736, 752, 5], [764, 776, 2], [783, 844, 20], [853, 896, 15], [907, 962, 18], [972, 983, 5], [992, 1167, 52],
];
const ticks = tickGroups.flatMap(([a, b, n]) =>
  Array.from({ length: n }, (_, i) => (a + (n > 1 ? ((b - a) * i) / (n - 1) : 0)) / 2.036 + 390)
);

function MapDrawing() {
  return (
    <svg viewBox="12 9 2271 2661" className="w-[757px] h-[887px] block" fontFamily="Roboto, 'Open Sans', sans-serif">
      <defs>
        <filter id="relief" x="0" y="0" width="2300" height="2700" filterUnits="userSpaceOnUse" colorInterpolationFilters="sRGB">
          <feTurbulence type="fractalNoise" baseFrequency="0.05" numOctaves="3" seed="4" result="edge" />
          <feDisplacementMap in="SourceGraphic" in2="edge" scale="20" xChannelSelector="R" yChannelSelector="G" result="land" />
          <feTurbulence type="fractalNoise" baseFrequency="0.011" numOctaves="4" seed="9" result="hills" />
          <feDiffuseLighting in="hills" surfaceScale="17" diffuseConstant="1.1" lightingColor="#fff" result="shade">
            <feDistantLight azimuth="225" elevation="65" />
          </feDiffuseLighting>
          <feColorMatrix in="shade" type="matrix" values="0.42 0 0 0 0.59  0.36 0 0 0 0.65  0.75 0 0 0 0.25  0 0 0 1 0" result="tint" />
          <feBlend in="tint" in2="land" mode="multiply" result="b" />
          <feComposite in="b" in2="land" operator="in" />
        </filter>
        <filter id="rough" x="0" y="0" width="2300" height="2700" filterUnits="userSpaceOnUse">
          <feTurbulence type="fractalNoise" baseFrequency="0.04" numOctaves="3" seed="4" />
          <feDisplacementMap in="SourceGraphic" scale="22" xChannelSelector="R" yChannelSelector="G" />
        </filter>
        <path id="aegean" d="M1130 1065Q1160 1150 1275 1300" />
        <path id="crete" d="M1092 1682Q1220 1736 1410 1734" />
      </defs>
      <rect width="2300" height="2700" fill="#75cff0" />
      <g filter="url(#relief)">
        <path d={mainland} fill="#ebead9" />
        {islands.map((d, i) => <path key={i} d={d} fill="#e9ecd0" />)}
      </g>
      <g filter="url(#rough)" fill="none" strokeLinejoin="round" strokeLinecap="round">
        {lakes.map((d, i) => <path key={i} d={d} fill="#75cff0" />)}
        {softBorders.map((d, i) => <path key={i} d={d} stroke="#b9b7bd" strokeWidth="3.500" />)}
        {whiteRoads.map((d, i) => <path key={i} d={d} stroke="#f8f7f0" strokeWidth="4" />)}
        {borders.map((d, i) => <path key={i} d={d} stroke="#a3a2b2" strokeWidth="6" />)}
        {roads.map((d, i) => <path key={i} d={d} stroke="#f8dfc9" strokeWidth="7" />)}
        {roads.map((d, i) => <path key={i} d={d} stroke="#f4a077" strokeWidth="4" />)}
      </g>

      {/* African coast */}
      <g transform="translate(0 2220) scale(1.473 1)">
        <path d="M8 395L60 410L110 450H8Z M300 450L318 400L300 350L290 290L305 205L330 160L360 130L410 92L440 92L475 62L520 68L560 85L620 118L622 170L635 190L690 205L730 235L790 230L820 238L825 285L870 322L910 302L960 315L1010 340L1090 375L1130 395L1180 400L1220 425L1240 442L1290 430L1330 385L1380 335L1420 318L1455 303L1490 315L1520 330L1548 322V450Z" fill="#efe8e2" />
        <path d="M330 165L360 130L410 92L440 92L475 62L520 68L560 85L600 110L520 100L460 110L420 150L370 180Z" fill="#e7ebd0" />
        <path d="M1400 330L1455 305L1548 330V450H1400L1430 400Z" fill="#e9ebd6" />
        <g fill="none" stroke="#b3b0ba" strokeWidth="2">
          <path d="M348 97L370 170L390 270L420 320M436 50L450 110L437 180L445 280L470 320M502 30L500 90L505 180L478 290L480 330M660 160L640 185M800 330L805 400L822 450M1480 285L1485 320M1375 300L1385 330M340 405L440 408L480 385L540 390L605 415V450M1520 290L1515 320" />
        </g>
        <g fill="none" stroke="#fff" strokeWidth="2.500">
          <path d="M335 160L360 135L420 120L460 90L540 85L600 115M720 235L560 300L545 370M940 320L990 370M1200 420L1240 440" />
        </g>
        <path d="M1345 385L1380 345L1395 330M1160 445L1170 450M1300 430L1400 435" stroke="#f4a077" strokeWidth="2.500" fill="none" />
      </g>

      {/* sea names */}
      <g fill="#b3e3f7" fontSize="42" fontStyle="italic">
        <text x="163" y="1294" textLength="146">Ionian</text>
        <text x="193" y="1370" textLength="84">Sea</text>
        <text x="840" y="2022" textLength="356">Mediterranean</text>
        <text x="974" y="2097" textLength="84">Sea</text>
        <text x="2140" y="312" fontSize="60" fontStyle="normal" textLength="190" transform="rotate(-4 2140 312)">Black</text>
        <text letterSpacing="6.500"><textPath href="#aegean">Aegean Sea</textPath></text>
        <text letterSpacing="7.500" fontSize="42"><textPath href="#crete">Sea of Crete</textPath></text>
      </g>

      {dots.map(([x, y, r], i) => <circle key={i} cx={x} cy={y} r={r || 5} fill="#111" stroke="#f4f3e8" strokeWidth="2" />)}
      {labels.map(([t, x, y, w, s, wt]) => (
        <text key={t + x} x={x - w / 2} y={y} textLength={w} lengthAdjust="spacingAndGlyphs" fontSize={s} fontWeight={wt} fill={wt === 700 ? "#333339" : "#5b5b60"} style={halo}>{t}</text>
      ))}

      {/* data footprint */}
      <g fill="none" stroke="#ff7f00">
        <path d="M648 722L1114 643L1170 982L713 1062Z" strokeWidth="6" />
        <path d="M650 737L1118 656" strokeWidth="3" />
      </g>
    </svg>
  );
}

function DateTag({ children, className }) {
  return (
    <div className={`absolute top-[807px] w-[94px] flex flex-col items-center ${className}`}>
      <div className="w-full h-[26px] bg-gradient-to-b from-[#dcdcdc] to-[#bdbdbd] text-[#333] text-[16px] leading-[29px] text-center">{children}</div>
      <div className="w-0 h-0 border-x-[7px] border-x-transparent border-t-[7px] border-t-[#bdbdbd]" />
    </div>
  );
}

function MapPanel() {
  return (
    <div className="relative w-[757px] h-[887px] overflow-hidden shrink-0">
      <MapDrawing />
      <div className="absolute left-[9px] top-[8px] w-[257px] h-[29px] flex border border-[#ccc] rounded-l-[4px] bg-white overflow-hidden">
        <div className="w-[30px] bg-[#eee] border-r border-[#ccc] flex items-center justify-center text-[#888]"><FaSearch className="w-[13px] h-[13px]" /></div>
        <div className="relative ml-[9px] mt-[6px] w-[207px] h-[15px] bg-[#3390ff] text-white text-[14px] leading-[14px] tracking-[-0.2px] whitespace-nowrap overflow-hidden">
          thes_snapping_ifg_s1a_a102_201504
          <FaTimes className="absolute right-[-3px] top-px w-[12px] h-[12px] text-[#aaa]" />
        </div>
      </div>
      <div className="absolute left-[295px] top-[19px] w-[71px] h-[16px] rounded-[3px] bg-[#808080] text-white font-bold text-[10px] leading-[15px] text-center">others</div>
      <div className="absolute left-0 top-[45px] w-[14px] h-[33px] bg-white flex items-center justify-center shadow">
        <div className="w-0 h-0 border-y-[5px] border-y-transparent border-r-[6px] border-r-[#222]" />
      </div>
      <div className="absolute left-[705px] top-[11px] w-[41px] h-[41px] rounded-[5px] bg-white shadow-[0_1px_5px_rgba(0,0,0,0.4)] flex items-center justify-center">
        <svg viewBox="0 0 30 28" className="w-[30px] h-[28px]">
          <path d="M15 12L29 19.500L15 27.500L1 19.500Z" fill="#8f8f8f" />
          <path d="M15 9L29 16.500L15 24.500L1 16.500Z" fill="#bbb" stroke="#fff" strokeWidth="0.600" />
          <path d="M15 6L29 13.500L15 21.500L1 13.500Z" fill="#999" stroke="#fff" strokeWidth="0.600" />
          <path d="M15 1L29 9.500L15 18.500L1 9.500Z" fill="#dadada" stroke="#fff" strokeWidth="0.600" />
          <path d="M15 1L29 9.500H1Z" fill="#ececec" />
        </svg>
      </div>
      <div className="absolute right-0 top-[62px] w-[12px] h-[33px] bg-white flex items-center justify-center shadow">
        <div className="w-0 h-0 border-y-[5px] border-y-transparent border-l-[6px] border-l-[#222]" />
      </div>

      {/* timeline */}
      <svg viewBox="394 942 757 46" className="absolute left-0 top-[799px] w-[757px] h-[46px]">
        <defs>
          <linearGradient id="fade" gradientUnits="userSpaceOnUse" x1="0" y1="942" x2="0" y2="986">
            <stop offset="0" stopColor="#e00f18" />
            <stop offset="0.45" stopColor="#ee3b3f" stopOpacity="0.8" />
            <stop offset="1" stopColor="#f66" stopOpacity="0.15" />
          </linearGradient>
        </defs>
        {ticks.map((x, i) => <rect key={i} x={Math.round(x)} y="942" width="1" height="44" fill="url(#fade)" />)}
      </svg>
      <div className="absolute left-[103px] top-[842px] w-[554px] h-[22px] bg-[#c5c5d2] border-y-2 border-[#8fa9bf]" />
      <div className="absolute left-[102px] top-[840px] w-[7px] h-[25px] bg-[#6d9ab8]/90" />
      <div className="absolute left-[649px] top-[840px] w-[7px] h-[25px] bg-[#6d9ab8]/90" />
      <div className="absolute left-[95px] top-[845px] w-0 h-0 border-y-[7px] border-y-transparent border-r-[7px] border-r-[#777]" />
      <div className="absolute left-[656px] top-[845px] w-0 h-0 border-y-[7px] border-y-transparent border-l-[7px] border-l-[#777]" />
      <DateTag className="left-[58px]">2015-04-01</DateTag>
      <DateTag className="left-[608px]">2022-01-01</DateTag>
      <div className="absolute left-0 bottom-0 h-[17px] w-[138px] pl-[4px] bg-white/80 text-[#333] text-[12px] leading-[18px] whitespace-nowrap">Lon: 27.202 Lat: 37.805</div>
      <div className="absolute right-0 top-[851px] w-[63px] h-[18px] bg-white/60 border-2 border-t-0 border-[#777] text-[12px] leading-[16px] text-[#333] text-center pr-[6px]">100 km</div>
      <div className="absolute right-0 bottom-0 h-[17px] w-[58px] bg-white/80 text-[#333] text-[12px] leading-[18px] text-center">Terradue</div>
    </div>
  );
}

/* ---------- right panel ---------- */

function Bar({ title, open, className }) {
  const Icon = open ? FaChevronCircleDown : FaChevronCircleRight;
  return (
    <div className={`${open ? "h-[36px] rounded-t-[6px]" : "h-[37px] rounded-[6px]"} w-[740px] bg-[#ae9f96] flex items-start justify-between pl-[11px] pr-[11px] text-white ${className}`}>
      <span className="font-bold text-[18px] leading-[34px] tracking-[0px]">{title}</span>
      <Icon className="w-[22px] h-[22px] mt-[5px]" />
    </div>
  );
}

function ExternalLink() {
  return (
    <svg viewBox="0 0 17 16" className="w-[17px] h-[16px]" fill="none" stroke="#fff" strokeWidth="1.700">
      <path d="M9 3H3.500Q1 3 1 5.500V12.500Q1 15 3.500 15H10.500Q13 15 13 12.500V9" />
      <path d="M6.500 9.500L14 2" strokeWidth="2.200" />
      <path d="M10 0H16.500V6.500Z" fill="#fff" stroke="none" />
    </svg>
  );
}

function CopyIcon() {
  return (
    <svg viewBox="0 0 15 15" className="w-[15px] h-[15px]" fill="none" stroke="#333" strokeWidth="1.100" strokeLinejoin="round">
      <path d="M6 10.500H0.600V4.500L4.500 0.600H8.500V3.500M4.500 0.600V4.500H0.600" />
      <path d="M6 7.500L10 3.500H14.400V14.400H6ZM10 3.500V7.500H6" />
    </svg>
  );
}

const jobRows = [
  ["Name", <>SNAPPING PSI Thessaloniki S1 A102 201504-202012<FaPencilAlt className="w-[14px] h-[14px] ml-[4px]" /></>],
  ["Id", "4142e187-c3d8-4a77-9e1c-2e948835219e"],
  ["Service version", "0.40"],
  ["Started at", "Feb 26th 2021 15:22"],
  ["Finished at", "Feb 28th 2021 11:04"],
  ["Created by", "Michael Foumelis"],
  ["Status/Result Location", <ExternalLink />],
  ["Status", <span className="mt-[2px] w-[62px] h-[20px] rounded-[3px] bg-[#5cb85c] font-bold text-[12px] leading-[18px] text-center">Success</span>],
  ["Visibility", "restricted"],
];

function RightPanel() {
  return (
    <div className="w-[763px] h-[887px] bg-[#323232] text-white flex flex-col shrink-0">
      <div className="ml-[6px] w-[751px] h-[34px] border-b border-[#888] text-[20px] leading-[22px] pt-[11px] tracking-[0.08px]">Processing Services</div>
      <div className="flex items-start h-[73px] pl-[13px] pt-[16px]">
        <div className="mt-[2px] w-0 h-0 border-y-[9.500px] border-y-transparent border-r-[10px] border-r-white" />
        <h1 className="ml-[11px] mt-px font-bold text-[27px] leading-[30px] tracking-[0.28px] whitespace-nowrap">SNAPPING PSI Thessaloniki S1 A102 201504-202012</h1>
      </div>
      <Bar title="Job Info" open className="ml-[12px]" />
      <div className="pt-[7px] text-[16px] leading-[22px]">
        {jobRows.map(([k, v]) => (
          <div key={k} className="flex h-[22px]">
            <span className="w-[197px] text-right font-bold shrink-0 tracking-[-0.15px]">{k}</span>
            <span className="ml-[23px] flex items-center whitespace-nowrap tracking-[-0.13px]">{v}</span>
          </div>
        ))}
        <div className="flex mt-[11px]">
          <span className="w-[197px] text-right font-bold tracking-[-0.15px]">Share</span>
          <span className="ml-[22px] w-[29px] h-[29px] mt-px rounded-[5px] bg-white text-[#323232] flex items-center justify-center"><FaShareAlt className="w-[19px] h-[19px]" /></span>
        </div>
      </div>
      <Bar title="Parameters" className="ml-[12px] mt-[41px]" />
      <div className="ml-[12px] mt-[22px] w-[740px] h-[91px] rounded-[4px] bg-[#def0d8] border border-[#d6e9c6] text-[#3c763d] flex pl-[16px] pt-[16px]">
        <div>
          <div className="flex items-center text-[20px] leading-[24px]">
            <FaExclamationCircle className="w-[17px] h-[17px] mr-[6px]" />Success
          </div>
          <div className="mt-[10px] text-[16px] leading-[22px] tracking-[-0.15px]">The job was completed successfully.</div>
        </div>
        <FaTimes className="ml-auto mr-[19px] mt-[6px] w-[12px] h-[13px] text-[#b3c3ae]" />
      </div>
      <Bar title="Results" open className="ml-[12px] mt-[23px]" />
      <div className="flex mt-[7px] ml-[17px]">
        <span className="w-[209px] font-bold text-[16px] leading-[31px] tracking-[-0.12px]">Found layers in the result.</span>
        <span className="w-[114px] h-[33px] rounded-[3px] border border-[#ccc] bg-white text-[#333] text-[14px] flex items-center justify-center tracking-[-0.2px]">
          <FaMapMarkerAlt className="w-[9px] h-[13px] mr-[3px]" />Show results
        </span>
        <span className="ml-[4px] w-[38px] h-[33px] rounded-[3px] border border-[#ccc] bg-white flex items-center justify-center"><CopyIcon /></span>
      </div>
      <Bar title="Technical Support" className="ml-[12px] mt-[28px]" />
    </div>
  );
}

export default function App() {
  return (
    <div className="w-[1920px] h-[1030px] overflow-hidden bg-white flex flex-col font-['Liberation_Sans',Arial,sans-serif]">
      <Chrome />
      <Header />
      <div className="flex h-[887px]">
        <LeftPanel />
        <MapPanel />
        <div className="w-[6px] bg-white flex items-start pt-[415px]"><div className="w-full h-[56px] bg-[#dcdcdc]" /></div>
        <RightPanel />
      </div>
    </div>
  );
}
